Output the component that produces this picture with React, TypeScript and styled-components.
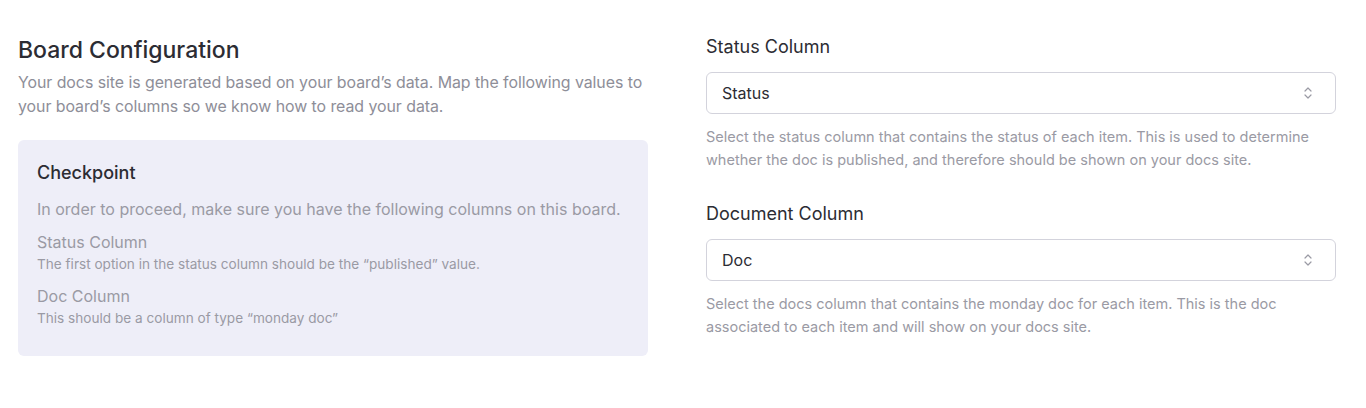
import React from "react";
import styled, { createGlobalStyle } from "styled-components";

const Global = createGlobalStyle`
  body { margin: 0; background: #fff; font-family: Inter, "Noto Sans", sans-serif; }
`;

const Page = styled.div`
  display: grid;
  grid-template-columns: 630px 630px;
  column-gap: 58px;
  padding: 34px 30px 0 18px;
`;

const Col = styled.div`
  display: flex;
  flex-direction: column;
`;

const Title = styled.h1`
  margin: 0;
  font-size: 23px;
  font-weight: 500;
  line-height: 32px;
  color: #2c2c33;
`;

const Lead = styled.p`
  margin: 5px 0 0;
  font-size: 15.9px;
  letter-spacing: -0.05px;
  line-height: 24px;
  color: #8e8e98;
`;

const Box = styled.div`
  margin-top: 21px;
  background: #eeeef8;
  border-radius: 6px;
  padding: 20px 19px 28px;
  display: flex;
  flex-direction: column;
`;

const BoxTitle = styled.h2`
  margin: 0;
  font-size: 18px;
  font-weight: 500;
  line-height: 26px;
  color: #2c2c33;
`;

const BoxText = styled.p`
  margin: 12px 0 0;
  font-size: 16px;
  line-height: 22px;
  color: #9a9aa4;
`;

const Item = styled.div`
  margin-top: 10px;
  display: flex;
  flex-direction: column;
`;

const ItemTitle = styled.div`
  font-size: 16px;
  line-height: 24px;
  color: #9a9aa4;
`;

const ItemText = styled.div`
  font-size: 13.6px;
  line-height: 20px;
  color: #9a9aa4;
`;

const Field = styled.div<{ $gap?: number }>`
  display: flex;
  flex-direction: column;
  margin-top: ${(p) => p.$gap ?? 0}px;
`;

const Label = styled.label`
  font-size: 18px;
  line-height: 26px;
  color: #2c2c33;
`;

const Select = styled.div`
  margin-top: 12px;
  height: 42px;
  box-sizing: border-box;
  border: 1px solid #d3d3dc;
  border-radius: 6px;
  display: flex;
  align-items: center;
  justify-content: space-between;
  padding: 0 22px 0 15px;
  font-size: 16px;
  color: #2c2c33;
`;

const Help = styled.p`
  margin: 11px 0 0;
  font-size: 14.5px;
  line-height: 23px;
  color: #9a9aa4;
`;

const Chevrons = () => (
  <svg width="10" height="14" viewBox="0 0 10 14" fill="none" stroke="#9a9aa4" strokeWidth="1.2" strokeLinecap="round" strokeLinejoin="round">
    <path d="M2 5 L5 2 L8 5" />
    <path d="M2 9 L5 12 L8 9" />
  </svg>
);

export default function App() {
  return (
    <>
      <Global />
      <Page>
        <Col>
          <Title>Board Configuration</Title>
          <Lead>
            Your docs site is generated based on your board’s data. Map the following values to your
            board’s columns so we know how to read your data.
          </Lead>
          <Box>
            <BoxTitle>Checkpoint</BoxTitle>
            <BoxText>In order to proceed, make sure you have the following columns on this board.</BoxText>
            <Item>
              <ItemTitle>Status Column</ItemTitle>
              <ItemText>The first option in the status column should be the “published” value.</ItemText>
            </Item>
            <Item>
              <ItemTitle>Doc Column</ItemTitle>
              <ItemText>This should be a column of type “monday doc”</ItemText>
            </Item>
          </Box>
        </Col>
        <Col>
          <Field>
            <Label>Status Column</Label>
            <Select>
              <span>Status</span>
              <Chevrons />
            </Select>
            <Help>
              Select the status column that contains the status of each item. This is used to determine
              whether the doc is published, and therefore should be shown on your docs site.
            </Help>
          </Field>
          <Field $gap={30}>
            <Label>Document Column</Label>
            <Select>
              <span>Doc</span>
              <Chevrons />
            </Select>
            <Help>
              Select the docs column that contains the monday doc for each item. This is the doc
              associated to each item and will show on your docs site.
            </Help>
          </Field>
        </Col>
      </Page>
    </>
  );
}
